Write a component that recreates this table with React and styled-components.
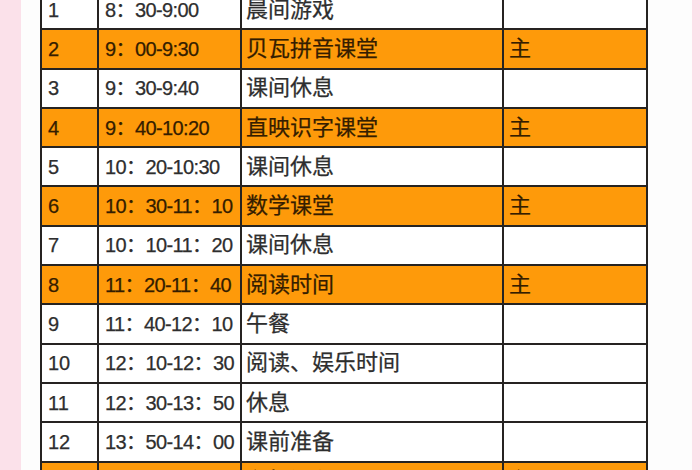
import React from 'react';
import styled, { createGlobalStyle } from 'styled-components';

const GlobalStyle = createGlobalStyle`
  html, body {
    margin: 0;
    padding: 0;
    background: #fbe1ea;
  }
`;

const schedule = [
  { no: '1', time: '8：30-9:00', name: '晨间游戏', tag: '' },
  { no: '2', time: '9：00-9:30', name: '贝瓦拼音课堂', tag: '主', main: true },
  { no: '3', time: '9：30-9:40', name: '课间休息', tag: '' },
  { no: '4', time: '9：40-10:20', name: '直映识字课堂', tag: '主', main: true },
  { no: '5', time: '10：20-10:30', name: '课间休息', tag: '' },
  { no: '6', time: '10：30-11：10', name: '数学课堂', tag: '主', main: true },
  { no: '7', time: '10：10-11：20', name: '课间休息', tag: '' },
  { no: '8', time: '11：20-11：40', name: '阅读时间', tag: '主', main: true },
  { no: '9', time: '11：40-12：10', name: '午餐', tag: '' },
  { no: '10', time: '12：10-12：30', name: '阅读、娱乐时间', tag: '' },
  { no: '11', time: '12：30-13：50', name: '休息', tag: '' },
  { no: '12', time: '13：50-14：00', name: '课前准备', tag: '' },
  { no: '13', time: '14：00-14：40', name: '兴趣课程', tag: '主', main: true },
];

const Page = styled.div`
  height: 470px;
  overflow: hidden;
  padding: 0 8px 0 21px;
`;

const Sheet = styled.div`
  height: 100%;
  background: #fdfdfd;
  padding-left: 19px;
  overflow: hidden;
`;

const Table = styled.table`
  border-collapse: collapse;
  table-layout: fixed;
  width: 606px;
  margin-top: -11px;
  font-family: 'Liberation Sans', 'Noto Sans CJK SC', sans-serif;
  font-size: 20px;
  -webkit-text-stroke: 0.25px currentColor;
`;

const Row = styled.tr`
  height: 39.3px;
  background: ${(p) => (p.$main ? '#fe9a0a' : '#ffffff')};
  color: ${(p) => (p.$main ? '#341d00' : '#2e2e2e')};
`;

const Cell = styled.td`
  border: 2px solid #262321;
  padding: 0 0 0 ${(p) => p.$pad || 5}px;
  white-space: nowrap;
  overflow: hidden;
  line-height: 1;
  vertical-align: middle;
`;

const TimeCell = styled(Cell)`
  letter-spacing: -0.6px;
`;

const NameCell = styled(Cell)`
  font-size: 22px;
`;

const cols = [57, 143, 262, 144];

const App = () => (
  <>
    <GlobalStyle />
    <Page>
      <Sheet>
        <Table>
          <colgroup>
            {cols.map((w, i) => (
              <col key={i} style={{ width: w }} />
            ))}
          </colgroup>
          <tbody>
            {schedule.map((r) => (
              <Row key={r.no} $main={r.main}>
                <Cell $pad={6}>{r.no}</Cell>
                <TimeCell $pad={6}>{r.time}</TimeCell>
                <NameCell $pad={4}>{r.name}</NameCell>
                <NameCell $pad={5}>{r.tag}</NameCell>
              </Row>
            ))}
          </tbody>
        </Table>
      </Sheet>
    </Page>
  </>
);

export default App;
